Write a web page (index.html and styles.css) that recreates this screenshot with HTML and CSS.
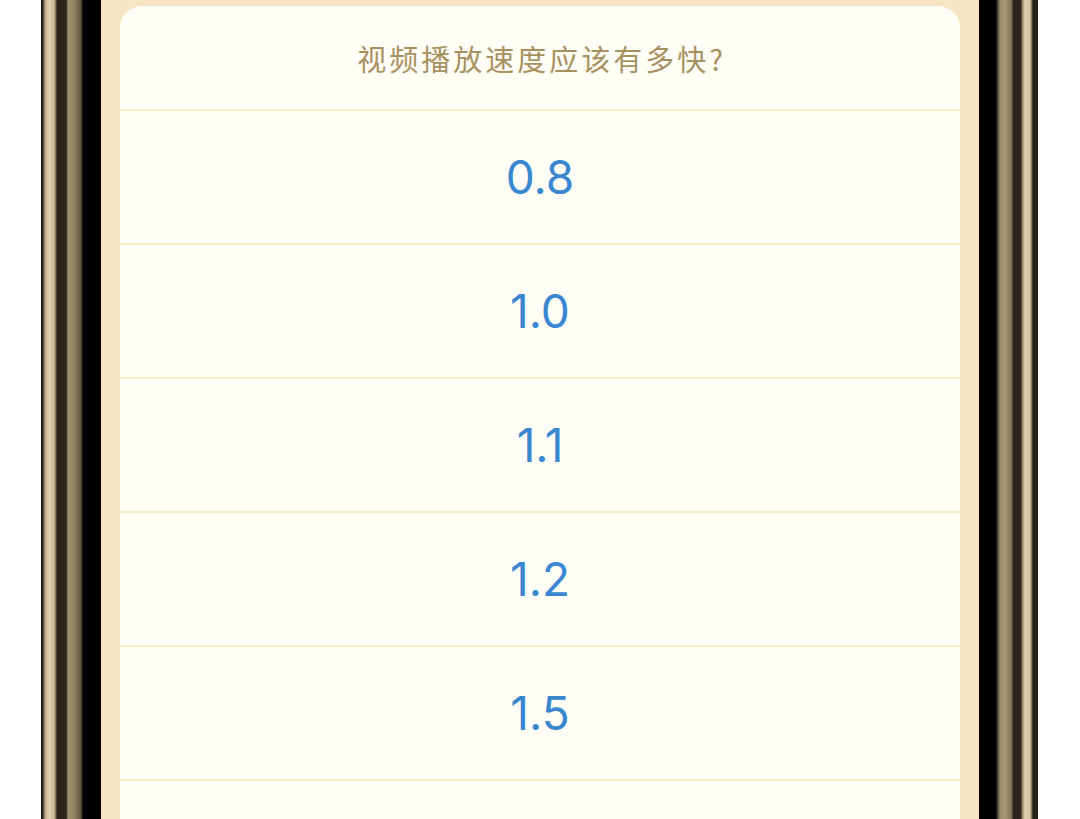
FILE: index.html
```html
<!DOCTYPE html>
<html lang="zh-CN">
<head>
<meta charset="utf-8">
<title>视频播放速度</title>
<link rel="stylesheet" href="styles.css">
</head>
<body>
<div class="stage">
  <div class="frame frame-left"></div>
  <div class="screen">
    <div class="sheet">
      <div class="sheet-title">视频播放速度应该有多快?</div>
      <div class="option">0.8</div>
      <div class="option">1.0</div>
      <div class="option">1.1</div>
      <div class="option">1.2</div>
      <div class="option">1.5</div>
      <div class="option"></div>
    </div>
  </div>
  <div class="frame frame-right"></div>
</div>
</body>
</html>
```
FILE: styles.css
```css
html, body {
  margin: 0;
  padding: 0;
  background: #ffffff;
  overflow: hidden;
}
.stage {
  display: flex;
  width: 1080px;
  height: 819px;
  padding: 0 42px 0 41px;
  box-sizing: border-box;
  overflow: hidden;
}
.frame {
  flex: 0 0 auto;
  height: 100%;
}
.frame-left {
  width: 60px;
  background: linear-gradient(to right,
    #231e16 0px, #2a2419 2px,
    #8c7c5e 3px, #c9b892 5px, #e0d0ae 8px, #cdbb96 13px, #7a6a50 15px,
    #2a241b 16px, #2a241b 25px,
    #5c513f 26px, #a39272 27px, #8e7e60 34px, #5e533f 40px, #2e2a20 41px,
    #000000 42px, #000000 60px);
}
.frame-right {
  width: 59px;
  background: linear-gradient(to right,
    #000000 0px, #000000 17px,
    #3a3326 18px, #9a8a6a 21px, #a89878 26px, #7a6c52 33px,
    #2a241b 34px, #2a241b 42px,
    #8c7c5e 43px, #e0d0ae 46px, #d2c29e 51px, #6e604a 53px,
    #231e16 54px, #231e16 59px);
}
.screen {
  flex: 1 1 auto;
  background: #f6e4c4;
  padding: 6px 19px 0 19px;
  overflow: hidden;
}
.sheet {
  background: #fffef7;
  border-radius: 22px 22px 0 0;
  display: flex;
  flex-direction: column;
  height: 900px;
}
.sheet-title {
  flex: 0 0 auto;
  height: 105px;
  display: flex;
  align-items: center;
  justify-content: center;
  box-sizing: border-box;
  padding-left: 3px;
  font-family: "Noto Sans CJK SC", "Noto Sans", sans-serif;
  font-size: 29px;
  letter-spacing: 3px;
  color: #a8915f;
  border-bottom: 2px solid #f9eecb;
}
.option {
  flex: 0 0 auto;
  height: 134px;
  box-sizing: border-box;
  border-bottom: 2px solid #f9eecb;
  display: flex;
  align-items: center;
  justify-content: center;
  font-family: Inter, "Noto Sans", sans-serif;
  font-size: 46px;
  font-weight: 400;
  color: #3a87d1;
}
```
